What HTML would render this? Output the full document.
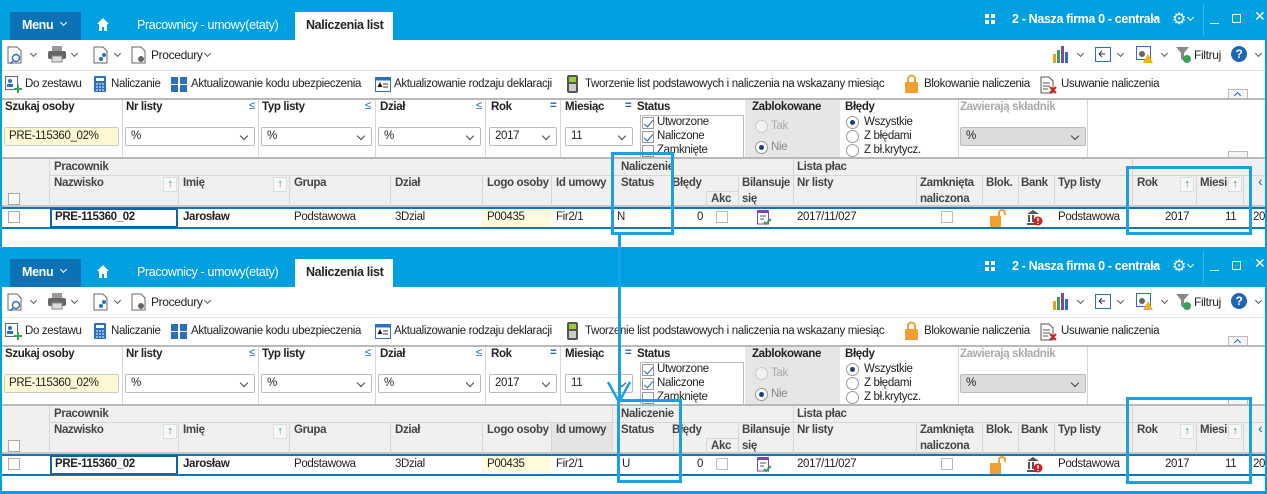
<!DOCTYPE html>
<html><head><meta charset="utf-8">
<style>
*{margin:0;padding:0;box-sizing:border-box}
body{width:1267px;height:494px;overflow:hidden;background:#00a0e1;font-family:"Liberation Sans",sans-serif;font-size:11.5px;letter-spacing:-0.35px;color:#222}
.p{position:absolute;left:0;width:1267px;height:247px;overflow:hidden}
.a{position:absolute;white-space:nowrap}
.wh{background:#fff}
.hd{color:#fff;font-size:12.5px}
.b{font-weight:bold}
.sel{position:absolute;height:19px;border:1px solid #bbb;border-radius:2px;background:#fff;padding:2px 5px}
.sel:after{content:"";position:absolute;right:7px;top:5px;width:5px;height:5px;border-right:1px solid #444;border-bottom:1px solid #444;transform:rotate(45deg)}
.cb{position:absolute;width:12px;height:12px;border:1px solid #999;background:#fff}
.ck:after{content:"";position:absolute;left:3px;top:0px;width:4px;height:8px;border-right:1.5px solid #1a5fa8;border-bottom:1.5px solid #1a5fa8;transform:rotate(40deg)}
.rd{position:absolute;width:13px;height:13px;border:1px solid #999;border-radius:50%;background:#fff}
.rdon:after{content:"";position:absolute;left:3px;top:3px;width:5px;height:5px;border-radius:50%;background:#1b3f7a}
.vl{position:absolute;width:1px;background:#d6d6d6}
.chev{position:absolute;width:5px;height:5px;border-right:1px solid #555;border-bottom:1px solid #555;transform:rotate(45deg)}
.wchev{position:absolute;width:5px;height:5px;border-right:1px solid #fff;border-bottom:1px solid #fff;transform:rotate(45deg)}
.sort{position:absolute;width:14px;height:15px;background:#f7f7f7;border:1px solid #ddd;color:#3aa05a;font-size:11px;text-align:center;line-height:13px}
.hl{position:absolute;border:3px solid #1aa0e6}
</style></head><body>

<!-- PANEL 1 -->
<div class="p" style="top:0">
 <div class="a" style="left:10px;top:12px;width:71px;height:28px;background:#0b72b5"></div>
 <div class="a hd b" style="left:22px;top:18px">Menu</div>
 <div class="wchev" style="left:61px;top:20px"></div>
 <svg class="a" style="left:97px;top:18px" width="12" height="13"><path d="M6 0L0 6h2v7h3V9h2v4h3V6h2z" fill="#fff"/></svg>
 <div class="a hd" style="left:137px;top:18px">Pracownicy - umowy(etaty)</div>
 <div class="a wh" style="left:295px;top:12px;width:98px;height:30px"></div>
 <div class="a b" style="left:306px;top:18px;font-size:12.5px">Naliczenia list</div>
 <svg class="a" style="left:985px;top:14px" width="10" height="10"><rect width="4" height="4" fill="#fff"/><rect x="6" width="4" height="4" fill="#fff"/><rect y="6" width="4" height="4" fill="#fff"/><rect x="6" y="6" width="4" height="4" fill="#fff"/></svg>
 <div class="a hd b" style="left:1012px;top:12px">2 - Nasza firma 0 - centrala</div>
 <div class="wchev" style="left:1152px;top:15px"></div>
 <div class="a" style="left:1172px;top:9px;color:#fff;font-size:16px">⚙</div>
 <div class="wchev" style="left:1188px;top:15px"></div>
 <div class="a" style="left:1203px;top:4px;width:1px;height:32px;background:#3bb6ea"></div>
 <div class="a" style="left:1210px;top:23px;width:9px;height:1px;background:#fff"></div>
 <div class="a" style="left:1232px;top:14px;width:9px;height:9px;border:1px solid #fff"></div>
 <div class="a" style="left:1254px;top:8px;color:#fff;font-size:14px">✕</div>

 <div class="a wh" style="left:2px;top:40px;width:1263px;height:207px"></div>
 <!-- toolbar1 -->
 <svg class="a" style="left:7px;top:46px" width="16" height="18"><path d="M1 1h9l4 4v12H1z" fill="none" stroke="#666"/><circle cx="9" cy="12" r="3.5" fill="none" stroke="#2a6fc0" stroke-width="1.4"/><path d="M6 15l-3 3" stroke="#2a6fc0" stroke-width="1.4"/></svg>
 <div class="chev" style="left:31px;top:51px"></div>
 <svg class="a" style="left:48px;top:46px" width="18" height="17"><rect x="4" y="0" width="10" height="5" fill="#999"/><rect x="0" y="5" width="18" height="8" rx="2" fill="#666"/><rect x="4" y="10" width="10" height="6" fill="#ddd" stroke="#888"/></svg>
 <div class="chev" style="left:72px;top:51px"></div>
 <svg class="a" style="left:93px;top:46px" width="16" height="18"><path d="M1 1h9l4 4v12H1z" fill="none" stroke="#666"/><circle cx="11" cy="9" r="2" fill="#2a6fc0"/><circle cx="8" cy="13" r="2" fill="#2a6fc0"/></svg>
 <div class="chev" style="left:115px;top:51px"></div>
 <svg class="a" style="left:131px;top:46px" width="16" height="18"><path d="M1 1h9l4 4v12H1z" fill="none" stroke="#666"/><circle cx="10" cy="13" r="3" fill="#666"/></svg>
 <div class="a" style="left:151px;top:48px;font-size:12px">Procedury</div>
 <div class="chev" style="left:205px;top:51px"></div>

 <svg class="a" style="left:1053px;top:46px" width="16" height="17"><rect x="0" y="8" width="3" height="9" fill="#e8a020"/><rect x="4" y="4" width="3" height="13" fill="#38a048"/><rect x="8" y="0" width="3" height="17" fill="#7a45b5"/><rect x="12" y="6" width="3" height="11" fill="#2a6fc0"/></svg>
 <div class="chev" style="left:1078px;top:51px"></div>
 <svg class="a" style="left:1095px;top:47px" width="16" height="15"><rect x="0.5" y="0.5" width="15" height="14" fill="#fff" stroke="#2a6fc0"/><path d="M4 7h6M4 7l3-3M4 7l3 3" stroke="#333"/></svg>
 <div class="chev" style="left:1118px;top:51px"></div>
 <svg class="a" style="left:1136px;top:46px" width="18" height="18"><rect x="0.5" y="0.5" width="14" height="13" fill="#fff" stroke="#2a6fc0"/><circle cx="6" cy="8" r="3" fill="#666"/><path d="M12 8l5 9H7z" fill="#f0b020"/></svg>
 <div class="chev" style="left:1162px;top:51px"></div>
 <svg class="a" style="left:1176px;top:47px" width="16" height="16"><path d="M0 0h13L8 6v8L5 12V6z" fill="#888"/><circle cx="11" cy="12" r="4" fill="#3aa05a"/></svg>
 <div class="a" style="left:1194px;top:48px;font-size:12px">Filtruj</div>
 <div class="a" style="left:1231px;top:46px;width:16px;height:16px;border-radius:50%;background:#1f64b5;color:#fff;font-weight:bold;text-align:center;line-height:16px;font-size:12px">?</div>
 <div class="chev" style="left:1256px;top:51px"></div>
 <div class="a" style="left:2px;top:70px;width:1263px;height:1px;background:#e2e2e2"></div>
 <!-- toolbar2 -->
 <svg class="a" style="left:5px;top:76px" width="17" height="17"><rect x="0.5" y="0.5" width="12" height="13" fill="#fff" stroke="#667"/><circle cx="5" cy="5" r="2" fill="#2a6fc0"/><rect x="2" y="8" width="6" height="3" fill="#2a6fc0"/><path d="M13 9v8M9 13h8" stroke="#3aa05a" stroke-width="2"/></svg>
 <div class="a" style="left:25px;top:78px">Do zestawu</div>
 <svg class="a" style="left:94px;top:76px" width="12" height="16"><rect width="12" height="16" rx="1" fill="#2a6fc0"/><rect x="2" y="2" width="8" height="3" fill="#fff"/><path d="M2 8h2M5 8h2M8 8h2M2 11h2M5 11h2M8 11h2M2 14h2M5 14h2M8 14h2" stroke="#fff"/></svg>
 <div class="a" style="left:111px;top:78px">Naliczanie</div>
 <svg class="a" style="left:171px;top:77px" width="16" height="15"><rect width="7" height="7" fill="#2a6fc0"/><rect x="9" width="7" height="7" fill="#2a6fc0"/><rect y="8" width="7" height="7" fill="#2a6fc0"/><rect x="9" y="8" width="7" height="7" fill="#2a6fc0"/></svg>
 <div class="a" style="left:191px;top:78px">Aktualizowanie kodu ubezpieczenia</div>
 <svg class="a" style="left:375px;top:77px" width="16" height="15"><rect x="0.5" y="0.5" width="15" height="14" fill="#fff" stroke="#2a6fc0"/><rect x="0.5" y="0.5" width="15" height="3" fill="#2a6fc0"/><path d="M3 10l2-4 2 4M8 7h5M8 10h5" stroke="#333"/></svg>
 <div class="a" style="left:394px;top:78px">Aktualizowanie rodzaju deklaracji</div>
 <svg class="a" style="left:567px;top:75px" width="11" height="18"><rect width="11" height="18" rx="2" fill="#555"/><rect x="2" y="2" width="7" height="5" fill="#9c3"/><rect x="2" y="9" width="7" height="7" fill="#ccc"/></svg>
 <div class="a" style="left:585px;top:78px">Tworzenie list podstawowych i naliczenia na wskazany miesiąc</div>
 <svg class="a" style="left:905px;top:74px" width="13" height="19"><path d="M3 8V5a3.5 3.5 0 0 1 7 0v3" fill="none" stroke="#f0a030" stroke-width="2"/><rect y="8" width="13" height="11" rx="1" fill="#f0a030"/></svg>
 <div class="a" style="left:924px;top:78px">Blokowanie naliczenia</div>
 <svg class="a" style="left:1040px;top:76px" width="17" height="18"><path d="M1 1h8l4 4v12H1z" fill="#fff" stroke="#555"/><path d="M3 7h7M3 10h7M3 13h5" stroke="#555"/><path d="M10 11l6 6M16 11l-6 6" stroke="#d02020" stroke-width="2"/></svg>
 <div class="a" style="left:1061px;top:78px">Usuwanie naliczenia</div>
 <div class="a" style="left:1228px;top:89px;width:20px;height:10px;border:1px solid #bbb;background:#f5f5f5"></div>
 <div class="a" style="left:1235px;top:93px;width:5px;height:5px;border-left:1px solid #1f64b5;border-top:1px solid #1f64b5;transform:rotate(45deg)"></div>
 <!-- filters -->
 <div class="a" style="left:2px;top:98px;width:1263px;height:2px;background:#b9b9b9"></div>
 <div class="a" style="left:745px;top:100px;width:95px;height:58px;background:#e6e6e6"></div>
 <div class="vl" style="left:122px;top:100px;height:58px"></div>
 <div class="vl" style="left:258px;top:100px;height:58px"></div>
 <div class="vl" style="left:375px;top:100px;height:58px"></div>
 <div class="vl" style="left:485px;top:100px;height:58px"></div>
 <div class="vl" style="left:560px;top:100px;height:58px"></div>
 <div class="vl" style="left:958px;top:100px;height:58px"></div>
 <div class="vl" style="left:1087px;top:100px;height:58px"></div>
 <div class="a b" style="left:5px;top:101px">Szukaj osoby</div>
 <div class="a b" style="left:126px;top:101px">Nr listy</div><div class="a" style="left:249px;top:100px;color:#1f64b5">≤</div>
 <div class="a b" style="left:262px;top:101px">Typ listy</div><div class="a" style="left:365px;top:100px;color:#1f64b5">≤</div>
 <div class="a b" style="left:380px;top:101px">Dział</div><div class="a" style="left:476px;top:100px;color:#1f64b5">≤</div>
 <div class="a b" style="left:491px;top:101px">Rok</div><div class="a b" style="left:550px;top:100px;color:#1f64b5">=</div>
 <div class="a b" style="left:565px;top:101px">Miesiąc</div><div class="a b" style="left:625px;top:100px;color:#1f64b5">=</div>
 <div class="a b" style="left:637px;top:101px">Status</div>
 <div class="a b" style="left:752px;top:101px">Zablokowane</div>
 <div class="a b" style="left:845px;top:101px">Błędy</div>
 <div class="a b" style="left:960px;top:101px;color:#aaa">Zawierają składnik</div>
 <div class="a" style="left:4px;top:127px;width:115px;height:19px;background:#fff8d4;border:1px solid #ccc;border-radius:2px;padding:2px 4px">PRE-115360_02%</div>
 <div class="sel" style="left:125px;top:127px;width:130px">%</div>
 <div class="sel" style="left:261px;top:127px;width:111px">%</div>
 <div class="sel" style="left:378px;top:127px;width:103px">%</div>
 <div class="sel" style="left:489px;top:127px;width:68px">2017</div>
 <div class="sel" style="left:565px;top:127px;width:68px">11</div>
 <div class="a" style="left:640px;top:115px;width:104px;height:45px;border:1px solid #bbb;background:#fff"></div>
 <div class="cb ck" style="left:642px;top:117px"></div><div class="a" style="left:657px;top:116px">Utworzone</div>
 <div class="cb ck" style="left:642px;top:131px"></div><div class="a" style="left:657px;top:130px">Naliczone</div>
 <div class="cb" style="left:642px;top:145px"></div><div class="a" style="left:657px;top:144px">Zamknięte</div>
 <div class="rd" style="left:755px;top:120px;background:#f2f2f2;border-color:#ccc"></div><div class="a" style="left:771px;top:120px;color:#aaa">Tak</div>
 <div class="rd rdon" style="left:755px;top:141px"></div><div class="a" style="left:771px;top:141px;color:#888">Nie</div>
 <div class="rd rdon" style="left:846px;top:116px"></div><div class="a" style="left:864px;top:116px">Wszystkie</div>
 <div class="rd" style="left:846px;top:130px"></div><div class="a" style="left:864px;top:130px">Z błędami</div>
 <div class="rd" style="left:846px;top:144px"></div><div class="a" style="left:864px;top:144px">Z bł.krytycz.</div>
 <div class="sel" style="left:960px;top:127px;width:126px;background:#dcdcdc">%</div>
 <div class="a" style="left:1228px;top:151px;width:20px;height:8px;border:1px solid #bbb;background:#f5f5f5"></div>
 <!-- grid header -->
 <div class="a" style="left:2px;top:157px;width:1263px;height:50px;background:#f0f0f0;border-top:2px solid #b9b9b9;border-bottom:2px solid #c8c8c8"></div>
 <div class="a" style="left:49px;top:175px;width:1216px;height:1px;background:#d6d6d6"></div>
 <div class="vl" style="left:49px;top:159px;height:48px"></div>
 <div class="vl" style="left:178px;top:176px;height:31px"></div>
 <div class="vl" style="left:289px;top:176px;height:31px"></div>
 <div class="vl" style="left:390px;top:176px;height:31px"></div>
 <div class="vl" style="left:482px;top:176px;height:31px"></div>
 <div class="vl" style="left:551px;top:176px;height:31px"></div>
 <div class="vl" style="left:612px;top:159px;height:48px"></div>
 <div class="vl" style="left:673px;top:176px;height:31px"></div>
 <div class="vl" style="left:706px;top:192px;height:15px"></div>
 <div class="a" style="left:706px;top:191px;width:32px;height:1px;background:#d6d6d6"></div>
 <div class="vl" style="left:738px;top:176px;height:31px"></div>
 <div class="vl" style="left:793px;top:159px;height:48px"></div>
 <div class="vl" style="left:916px;top:176px;height:31px"></div>
 <div class="vl" style="left:982px;top:176px;height:31px"></div>
 <div class="vl" style="left:1018px;top:176px;height:31px"></div>
 <div class="vl" style="left:1054px;top:176px;height:31px"></div>
 <div class="vl" style="left:1132px;top:159px;height:48px"></div>
 <div class="vl" style="left:1196px;top:176px;height:31px"></div>
 <div class="vl" style="left:1243px;top:176px;height:31px"></div>
 <div class="a b" style="left:54px;top:161px;color:#444">Pracownik</div>
 <div class="a b" style="left:621px;top:161px;color:#444">Naliczenie</div>
 <div class="a b" style="left:797px;top:161px;color:#444">Lista płac</div>
 <div class="cb" style="left:8px;top:193px;border-color:#aaa"></div>
 <div class="a b" style="left:54px;top:177px;color:#444">Nazwisko</div><div class="sort" style="left:163px;top:177px">↑</div>
 <div class="a b" style="left:183px;top:177px;color:#444">Imię</div><div class="sort" style="left:273px;top:177px">↑</div>
 <div class="a b" style="left:294px;top:177px;color:#444">Grupa</div>
 <div class="a b" style="left:395px;top:177px;color:#444">Dział</div>
 <div class="a b" style="left:487px;top:177px;color:#444">Logo osoby</div>
 <div class="a b" style="left:556px;top:177px;color:#444">Id umowy</div>
 <div class="a b" style="left:621px;top:177px;color:#444">Status</div>
 <div class="a b" style="left:672px;top:177px;color:#444">Błędy</div>
 <div class="a b" style="left:711px;top:193px;color:#444">Akc</div>
 <div class="a b" style="left:742px;top:177px;color:#444">Bilansuje</div>
 <div class="a b" style="left:742px;top:193px;color:#444">się</div>
 <div class="a b" style="left:797px;top:177px;color:#444">Nr listy</div>
 <div class="a b" style="left:920px;top:177px;color:#444">Zamknięta</div>
 <div class="a b" style="left:920px;top:193px;color:#444">naliczona</div>
 <div class="a b" style="left:986px;top:177px;color:#444">Blok.</div>
 <div class="a b" style="left:1021px;top:177px;color:#444">Bank</div>
 <div class="a b" style="left:1058px;top:177px;color:#444">Typ listy</div>
 <div class="a b" style="left:1137px;top:177px;color:#444">Rok</div><div class="sort" style="left:1180px;top:177px">↑</div>
 <div class="a b" style="left:1200px;top:177px;color:#444">Miesi</div><div class="sort" style="left:1228px;top:177px">↑</div>
 <div class="a" style="left:1258px;top:173px;color:#1f64b5;font-size:14px">‹</div>
 <!-- row -->
 <div class="a" style="left:2px;top:207px;width:1263px;height:2px;background:#1075c0"></div>
 <div class="a" style="left:2px;top:227px;width:1263px;height:2px;background:#1075c0"></div>
 <div class="a" style="left:482px;top:209px;width:69px;height:18px;background:#fffbdc"></div>
 <div class="cb" style="left:8px;top:211px;border-color:#aaa"></div>
 <div class="a" style="left:50px;top:208px;width:128px;height:20px;border:2px solid #1263a8"></div>
 <div class="a b" style="left:55px;top:211px">PRE-115360_02</div>
 <div class="a b" style="left:183px;top:211px">Jarosław</div>
 <div class="a" style="left:294px;top:211px">Podstawowa</div>
 <div class="a" style="left:395px;top:211px">3Dzial</div>
 <div class="a" style="left:487px;top:211px">P00435</div>
 <div class="a" style="left:556px;top:211px">Fir2/1</div>
 <div class="a" style="left:617px;top:211px">N</div>
 <div class="a" style="left:697px;top:211px">0</div>
 <div class="cb" style="left:716px;top:211px;border-color:#bbb"></div>
 <svg class="a" style="left:757px;top:210px" width="15" height="16"><rect x="0.5" y="1" width="11" height="13" fill="#fff" stroke="#7a45b5"/><rect x="0.5" y="0" width="11" height="3" fill="#7a45b5"/><path d="M3 6h6M3 9h4" stroke="#555"/><path d="M7 12l2 2 5-5" stroke="#3aa05a" stroke-width="2" fill="none"/></svg>
 <div class="a" style="left:797px;top:211px">2017/11/027</div>
 <div class="cb" style="left:941px;top:211px;border-color:#bbb"></div>
 <svg class="a" style="left:990px;top:208px" width="16" height="19"><path d="M9 8V5a3 3 0 0 1 6 0v2" fill="none" stroke="#f0a030" stroke-width="2"/><rect y="8" width="11" height="11" fill="#f0a030"/></svg>
 <svg class="a" style="left:1026px;top:209px" width="17" height="17"><path d="M1 5L7 1l6 4z" fill="#555"/><rect x="2" y="6" width="2" height="7" fill="#555"/><rect x="6" y="6" width="2" height="7" fill="#555"/><rect x="1" y="14" width="9" height="2" fill="#555"/><circle cx="12" cy="12" r="4.5" fill="#d02020"/><path d="M12 9v3.5M12 14v1" stroke="#fff" stroke-width="1.5"/></svg>
 <div class="a" style="left:1058px;top:211px">Podstawowa</div>
 <div class="a" style="left:1165px;top:211px">2017</div>
 <div class="a" style="left:1225px;top:211px">11</div>
 <div class="a" style="left:1253px;top:211px">20</div>
</div>

<!-- PANEL 2 -->
<div class="p" style="top:247px">
 <div class="a" style="left:10px;top:12px;width:71px;height:28px;background:#0b72b5"></div>
 <div class="a hd b" style="left:22px;top:18px">Menu</div>
 <div class="wchev" style="left:61px;top:20px"></div>
 <svg class="a" style="left:97px;top:18px" width="12" height="13"><path d="M6 0L0 6h2v7h3V9h2v4h3V6h2z" fill="#fff"/></svg>
 <div class="a hd" style="left:137px;top:18px">Pracownicy - umowy(etaty)</div>
 <div class="a wh" style="left:295px;top:12px;width:98px;height:30px"></div>
 <div class="a b" style="left:306px;top:18px;font-size:12.5px">Naliczenia list</div>
 <svg class="a" style="left:985px;top:14px" width="10" height="10"><rect width="4" height="4" fill="#fff"/><rect x="6" width="4" height="4" fill="#fff"/><rect y="6" width="4" height="4" fill="#fff"/><rect x="6" y="6" width="4" height="4" fill="#fff"/></svg>
 <div class="a hd b" style="left:1012px;top:12px">2 - Nasza firma 0 - centrala</div>
 <div class="wchev" style="left:1152px;top:15px"></div>
 <div class="a" style="left:1172px;top:9px;color:#fff;font-size:16px">⚙</div>
 <div class="wchev" style="left:1188px;top:15px"></div>
 <div class="a" style="left:1203px;top:4px;width:1px;height:32px;background:#3bb6ea"></div>
 <div class="a" style="left:1210px;top:23px;width:9px;height:1px;background:#fff"></div>
 <div class="a" style="left:1232px;top:14px;width:9px;height:9px;border:1px solid #fff"></div>
 <div class="a" style="left:1254px;top:8px;color:#fff;font-size:14px">✕</div>

 <div class="a wh" style="left:2px;top:40px;width:1263px;height:204px"></div>
 <svg class="a" style="left:7px;top:46px" width="16" height="18"><path d="M1 1h9l4 4v12H1z" fill="none" stroke="#666"/><circle cx="9" cy="12" r="3.5" fill="none" stroke="#2a6fc0" stroke-width="1.4"/><path d="M6 15l-3 3" stroke="#2a6fc0" stroke-width="1.4"/></svg>
 <div class="chev" style="left:31px;top:51px"></div>
 <svg class="a" style="left:48px;top:46px" width="18" height="17"><rect x="4" y="0" width="10" height="5" fill="#999"/><rect x="0" y="5" width="18" height="8" rx="2" fill="#666"/><rect x="4" y="10" width="10" height="6" fill="#ddd" stroke="#888"/></svg>
 <div class="chev" style="left:72px;top:51px"></div>
 <svg class="a" style="left:93px;top:46px" width="16" height="18"><path d="M1 1h9l4 4v12H1z" fill="none" stroke="#666"/><circle cx="11" cy="9" r="2" fill="#2a6fc0"/><circle cx="8" cy="13" r="2" fill="#2a6fc0"/></svg>
 <div class="chev" style="left:115px;top:51px"></div>
 <svg class="a" style="left:131px;top:46px" width="16" height="18"><path d="M1 1h9l4 4v12H1z" fill="none" stroke="#666"/><circle cx="10" cy="13" r="3" fill="#666"/></svg>
 <div class="a" style="left:151px;top:48px;font-size:12px">Procedury</div>
 <div class="chev" style="left:205px;top:51px"></div>
 <svg class="a" style="left:1053px;top:46px" width="16" height="17"><rect x="0" y="8" width="3" height="9" fill="#e8a020"/><rect x="4" y="4" width="3" height="13" fill="#38a048"/><rect x="8" y="0" width="3" height="17" fill="#7a45b5"/><rect x="12" y="6" width="3" height="11" fill="#2a6fc0"/></svg>
 <div class="chev" style="left:1078px;top:51px"></div>
 <svg class="a" style="left:1095px;top:47px" width="16" height="15"><rect x="0.5" y="0.5" width="15" height="14" fill="#fff" stroke="#2a6fc0"/><path d="M4 7h6M4 7l3-3M4 7l3 3" stroke="#333"/></svg>
 <div class="chev" style="left:1118px;top:51px"></div>
 <svg class="a" style="left:1136px;top:46px" width="18" height="18"><rect x="0.5" y="0.5" width="14" height="13" fill="#fff" stroke="#2a6fc0"/><circle cx="6" cy="8" r="3" fill="#666"/><path d="M12 8l5 9H7z" fill="#f0b020"/></svg>
 <div class="chev" style="left:1162px;top:51px"></div>
 <svg class="a" style="left:1176px;top:47px" width="16" height="16"><path d="M0 0h13L8 6v8L5 12V6z" fill="#888"/><circle cx="11" cy="12" r="4" fill="#3aa05a"/></svg>
 <div class="a" style="left:1194px;top:48px;font-size:12px">Filtruj</div>
 <div class="a" style="left:1231px;top:46px;width:16px;height:16px;border-radius:50%;background:#1f64b5;color:#fff;font-weight:bold;text-align:center;line-height:16px;font-size:12px">?</div>
 <div class="chev" style="left:1256px;top:51px"></div>
 <div class="a" style="left:2px;top:70px;width:1263px;height:1px;background:#e2e2e2"></div>
 <svg class="a" style="left:5px;top:76px" width="17" height="17"><rect x="0.5" y="0.5" width="12" height="13" fill="#fff" stroke="#667"/><circle cx="5" cy="5" r="2" fill="#2a6fc0"/><rect x="2" y="8" width="6" height="3" fill="#2a6fc0"/><path d="M13 9v8M9 13h8" stroke="#3aa05a" stroke-width="2"/></svg>
 <div class="a" style="left:25px;top:78px">Do zestawu</div>
 <svg class="a" style="left:94px;top:76px" width="12" height="16"><rect width="12" height="16" rx="1" fill="#2a6fc0"/><rect x="2" y="2" width="8" height="3" fill="#fff"/><path d="M2 8h2M5 8h2M8 8h2M2 11h2M5 11h2M8 11h2M2 14h2M5 14h2M8 14h2" stroke="#fff"/></svg>
 <div class="a" style="left:111px;top:78px">Naliczanie</div>
 <svg class="a" style="left:171px;top:77px" width="16" height="15"><rect width="7" height="7" fill="#2a6fc0"/><rect x="9" width="7" height="7" fill="#2a6fc0"/><rect y="8" width="7" height="7" fill="#2a6fc0"/><rect x="9" y="8" width="7" height="7" fill="#2a6fc0"/></svg>
 <div class="a" style="left:191px;top:78px">Aktualizowanie kodu ubezpieczenia</div>
 <svg class="a" style="left:375px;top:77px" width="16" height="15"><rect x="0.5" y="0.5" width="15" height="14" fill="#fff" stroke="#2a6fc0"/><rect x="0.5" y="0.5" width="15" height="3" fill="#2a6fc0"/><path d="M3 10l2-4 2 4M8 7h5M8 10h5" stroke="#333"/></svg>
 <div class="a" style="left:394px;top:78px">Aktualizowanie rodzaju deklaracji</div>
 <svg class="a" style="left:567px;top:75px" width="11" height="18"><rect width="11" height="18" rx="2" fill="#555"/><rect x="2" y="2" width="7" height="5" fill="#9c3"/><rect x="2" y="9" width="7" height="7" fill="#ccc"/></svg>
 <div class="a" style="left:585px;top:78px">Tworzenie list podstawowych i naliczenia na wskazany miesiąc</div>
 <svg class="a" style="left:905px;top:74px" width="13" height="19"><path d="M3 8V5a3.5 3.5 0 0 1 7 0v3" fill="none" stroke="#f0a030" stroke-width="2"/><rect y="8" width="13" height="11" rx="1" fill="#f0a030"/></svg>
 <div class="a" style="left:924px;top:78px">Blokowanie naliczenia</div>
 <svg class="a" style="left:1040px;top:76px" width="17" height="18"><path d="M1 1h8l4 4v12H1z" fill="#fff" stroke="#555"/><path d="M3 7h7M3 10h7M3 13h5" stroke="#555"/><path d="M10 11l6 6M16 11l-6 6" stroke="#d02020" stroke-width="2"/></svg>
 <div class="a" style="left:1061px;top:78px">Usuwanie naliczenia</div>
 <div class="a" style="left:1228px;top:89px;width:20px;height:10px;border:1px solid #bbb;background:#f5f5f5"></div>
 <div class="a" style="left:1235px;top:93px;width:5px;height:5px;border-left:1px solid #1f64b5;border-top:1px solid #1f64b5;transform:rotate(45deg)"></div>
 <div class="a" style="left:2px;top:98px;width:1263px;height:2px;background:#b9b9b9"></div>
 <div class="a" style="left:745px;top:100px;width:95px;height:58px;background:#e6e6e6"></div>
 <div class="vl" style="left:122px;top:100px;height:58px"></div>
 <div class="vl" style="left:258px;top:100px;height:58px"></div>
 <div class="vl" style="left:375px;top:100px;height:58px"></div>
 <div class="vl" style="left:485px;top:100px;height:58px"></div>
 <div class="vl" style="left:560px;top:100px;height:58px"></div>
 <div class="vl" style="left:958px;top:100px;height:58px"></div>
 <div class="vl" style="left:1087px;top:100px;height:58px"></div>
 <div class="a b" style="left:5px;top:101px">Szukaj osoby</div>
 <div class="a b" style="left:126px;top:101px">Nr listy</div><div class="a" style="left:249px;top:100px;color:#1f64b5">≤</div>
 <div class="a b" style="left:262px;top:101px">Typ listy</div><div class="a" style="left:365px;top:100px;color:#1f64b5">≤</div>
 <div class="a b" style="left:380px;top:101px">Dział</div><div class="a" style="left:476px;top:100px;color:#1f64b5">≤</div>
 <div class="a b" style="left:491px;top:101px">Rok</div><div class="a b" style="left:550px;top:100px;color:#1f64b5">=</div>
 <div class="a b" style="left:565px;top:101px">Miesiąc</div><div class="a b" style="left:625px;top:100px;color:#1f64b5">=</div>
 <div class="a b" style="left:637px;top:101px">Status</div>
 <div class="a b" style="left:752px;top:101px">Zablokowane</div>
 <div class="a b" style="left:845px;top:101px">Błędy</div>
 <div class="a b" style="left:960px;top:101px;color:#aaa">Zawierają składnik</div>
 <div class="a" style="left:4px;top:127px;width:115px;height:19px;background:#fff8d4;border:1px solid #ccc;border-radius:2px;padding:2px 4px">PRE-115360_02%</div>
 <div class="sel" style="left:125px;top:127px;width:130px">%</div>
 <div class="sel" style="left:261px;top:127px;width:111px">%</div>
 <div class="sel" style="left:378px;top:127px;width:103px">%</div>
 <div class="sel" style="left:489px;top:127px;width:68px">2017</div>
 <div class="sel" style="left:565px;top:127px;width:68px">11</div>
 <div class="a" style="left:640px;top:115px;width:104px;height:45px;border:1px solid #bbb;background:#fff"></div>
 <div class="cb ck" style="left:642px;top:117px"></div><div class="a" style="left:657px;top:116px">Utworzone</div>
 <div class="cb ck" style="left:642px;top:131px"></div><div class="a" style="left:657px;top:130px">Naliczone</div>
 <div class="cb" style="left:642px;top:145px"></div><div class="a" style="left:657px;top:144px">Zamknięte</div>
 <div class="rd" style="left:755px;top:120px;background:#f2f2f2;border-color:#ccc"></div><div class="a" style="left:771px;top:120px;color:#aaa">Tak</div>
 <div class="rd rdon" style="left:755px;top:141px"></div><div class="a" style="left:771px;top:141px;color:#888">Nie</div>
 <div class="rd rdon" style="left:846px;top:116px"></div><div class="a" style="left:864px;top:116px">Wszystkie</div>
 <div class="rd" style="left:846px;top:130px"></div><div class="a" style="left:864px;top:130px">Z błędami</div>
 <div class="rd" style="left:846px;top:144px"></div><div class="a" style="left:864px;top:144px">Z bł.krytycz.</div>
 <div class="sel" style="left:960px;top:127px;width:126px;background:#dcdcdc">%</div>
 <div class="a" style="left:1228px;top:151px;width:20px;height:8px;border:1px solid #bbb;background:#f5f5f5"></div>
 <div class="a" style="left:2px;top:157px;width:1263px;height:50px;background:#f0f0f0;border-top:2px solid #b9b9b9;border-bottom:2px solid #c8c8c8"></div>
 <div class="a" style="left:551px;top:176px;width:61px;height:29px;background:#e4e4e4"></div>
 <div class="a" style="left:49px;top:175px;width:1216px;height:1px;background:#d6d6d6"></div>
 <div class="vl" style="left:49px;top:159px;height:48px"></div>
 <div class="vl" style="left:178px;top:176px;height:31px"></div>
 <div class="vl" style="left:289px;top:176px;height:31px"></div>
 <div class="vl" style="left:390px;top:176px;height:31px"></div>
 <div class="vl" style="left:482px;top:176px;height:31px"></div>
 <div class="vl" style="left:551px;top:176px;height:31px"></div>
 <div class="vl" style="left:612px;top:159px;height:48px"></div>
 <div class="vl" style="left:673px;top:176px;height:31px"></div>
 <div class="vl" style="left:706px;top:192px;height:15px"></div>
 <div class="a" style="left:706px;top:191px;width:32px;height:1px;background:#d6d6d6"></div>
 <div class="vl" style="left:738px;top:176px;height:31px"></div>
 <div class="vl" style="left:793px;top:159px;height:48px"></div>
 <div class="vl" style="left:916px;top:176px;height:31px"></div>
 <div class="vl" style="left:982px;top:176px;height:31px"></div>
 <div class="vl" style="left:1018px;top:176px;height:31px"></div>
 <div class="vl" style="left:1054px;top:176px;height:31px"></div>
 <div class="vl" style="left:1132px;top:159px;height:48px"></div>
 <div class="vl" style="left:1196px;top:176px;height:31px"></div>
 <div class="vl" style="left:1243px;top:176px;height:31px"></div>
 <div class="a b" style="left:54px;top:161px;color:#444">Pracownik</div>
 <div class="a b" style="left:621px;top:161px;color:#444">Naliczenie</div>
 <div class="a b" style="left:797px;top:161px;color:#444">Lista płac</div>
 <div class="cb" style="left:8px;top:193px;border-color:#aaa"></div>
 <div class="a b" style="left:54px;top:177px;color:#444">Nazwisko</div><div class="sort" style="left:163px;top:177px">↑</div>
 <div class="a b" style="left:183px;top:177px;color:#444">Imię</div><div class="sort" style="left:273px;top:177px">↑</div>
 <div class="a b" style="left:294px;top:177px;color:#444">Grupa</div>
 <div class="a b" style="left:395px;top:177px;color:#444">Dział</div>
 <div class="a b" style="left:487px;top:177px;color:#444">Logo osoby</div>
 <div class="a b" style="left:556px;top:177px;color:#444">Id umowy</div>
 <div class="a b" style="left:621px;top:177px;color:#444">Status</div>
 <div class="a b" style="left:672px;top:177px;color:#444">Błędy</div>
 <div class="a b" style="left:711px;top:193px;color:#444">Akc</div>
 <div class="a b" style="left:742px;top:177px;color:#444">Bilansuje</div>
 <div class="a b" style="left:742px;top:193px;color:#444">się</div>
 <div class="a b" style="left:797px;top:177px;color:#444">Nr listy</div>
 <div class="a b" style="left:920px;top:177px;color:#444">Zamknięta</div>
 <div class="a b" style="left:920px;top:193px;color:#444">naliczona</div>
 <div class="a b" style="left:986px;top:177px;color:#444">Blok.</div>
 <div class="a b" style="left:1021px;top:177px;color:#444">Bank</div>
 <div class="a b" style="left:1058px;top:177px;color:#444">Typ listy</div>
 <div class="a b" style="left:1137px;top:177px;color:#444">Rok</div><div class="sort" style="left:1180px;top:177px">↑</div>
 <div class="a b" style="left:1200px;top:177px;color:#444">Miesi</div><div class="sort" style="left:1228px;top:177px">↑</div>
 <div class="a" style="left:1258px;top:173px;color:#1f64b5;font-size:14px">‹</div>
 <div class="a" style="left:2px;top:207px;width:1263px;height:2px;background:#1075c0"></div>
 <div class="a" style="left:2px;top:227px;width:1263px;height:2px;background:#1075c0"></div>
 <div class="a" style="left:482px;top:209px;width:69px;height:18px;background:#fffbdc"></div>
 <div class="cb" style="left:8px;top:211px;border-color:#aaa"></div>
 <div class="a" style="left:50px;top:208px;width:128px;height:20px;border:2px solid #1263a8"></div>
 <div class="a b" style="left:55px;top:211px">PRE-115360_02</div>
 <div class="a b" style="left:183px;top:211px">Jarosław</div>
 <div class="a" style="left:294px;top:211px">Podstawowa</div>
 <div class="a" style="left:395px;top:211px">3Dzial</div>
 <div class="a" style="left:487px;top:211px">P00435</div>
 <div class="a" style="left:556px;top:211px">Fir2/1</div>
 <div class="a" style="left:622px;top:211px">U</div>
 <div class="a" style="left:697px;top:211px">0</div>
 <div class="cb" style="left:716px;top:211px;border-color:#bbb"></div>
 <svg class="a" style="left:757px;top:210px" width="15" height="16"><rect x="0.5" y="1" width="11" height="13" fill="#fff" stroke="#7a45b5"/><rect x="0.5" y="0" width="11" height="3" fill="#7a45b5"/><path d="M3 6h6M3 9h4" stroke="#555"/><path d="M7 12l2 2 5-5" stroke="#3aa05a" stroke-width="2" fill="none"/></svg>
 <div class="a" style="left:797px;top:211px">2017/11/027</div>
 <div class="cb" style="left:941px;top:211px;border-color:#bbb"></div>
 <svg class="a" style="left:990px;top:208px" width="16" height="19"><path d="M9 8V5a3 3 0 0 1 6 0v2" fill="none" stroke="#f0a030" stroke-width="2"/><rect y="8" width="11" height="11" fill="#f0a030"/></svg>
 <svg class="a" style="left:1026px;top:209px" width="17" height="17"><path d="M1 5L7 1l6 4z" fill="#555"/><rect x="2" y="6" width="2" height="7" fill="#555"/><rect x="6" y="6" width="2" height="7" fill="#555"/><rect x="1" y="14" width="9" height="2" fill="#555"/><circle cx="12" cy="12" r="4.5" fill="#d02020"/><path d="M12 9v3.5M12 14v1" stroke="#fff" stroke-width="1.5"/></svg>
 <div class="a" style="left:1058px;top:211px">Podstawowa</div>
 <div class="a" style="left:1165px;top:211px">2017</div>
 <div class="a" style="left:1225px;top:211px">11</div>
 <div class="a" style="left:1253px;top:211px">20</div>
</div>

<!-- highlights -->
<div class="hl" style="left:611px;top:152px;width:63px;height:83px"></div>
<div class="a" style="left:618px;top:233px;width:3px;height:168px;background:#1aa0e6"></div>
<svg class="a" style="left:606px;top:380px" width="26" height="24"><path d="M2 2l11 20L24 2" fill="none" stroke="#1aa0e6" stroke-width="2.5"/></svg>
<div class="hl" style="left:617px;top:399px;width:65px;height:84px"></div>
<div class="hl" style="left:1126px;top:166px;width:126px;height:69px"></div>
<div class="hl" style="left:1126px;top:397px;width:126px;height:87px"></div>
</body></html>
